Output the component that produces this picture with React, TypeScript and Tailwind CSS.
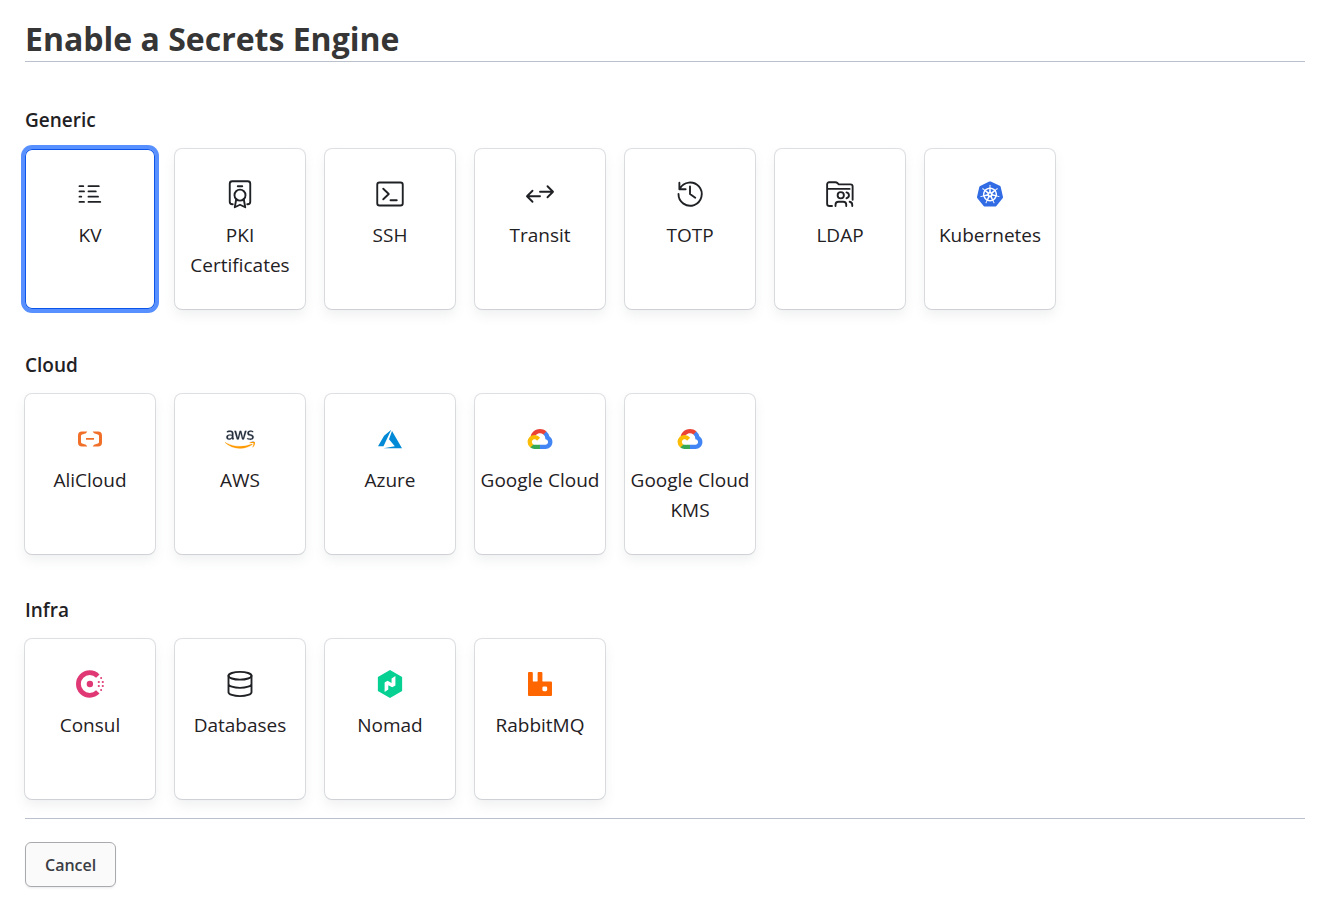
import React from "react";
import { FaAws } from "react-icons/fa";
import { SiKubernetes, SiNomad, SiRabbitmq } from "react-icons/si";

type Engine = { name: string; icon: React.ReactNode };

function Stroke({ children }: { children: React.ReactNode }) {
  return (
    <svg
      viewBox="0 0 24 24"
      className="size-[30px]"
      fill="none"
      stroke="currentColor"
      strokeWidth="1.5"
      strokeLinecap="round"
      strokeLinejoin="round"
      aria-hidden="true"
    >
      {children}
    </svg>
  );
}

const kv = (
  <Stroke>
    <path d="M3.6 5.7h3M10.8 5.7h8.2M3.6 9.9h3.6M10.8 9.9h5.8M3.6 14.1h1.4M10.8 14.1h7.6M3.6 18.3h3.6M10.8 18.3h9.4" />
  </Stroke>
);

const pki = (
  <Stroke>
    <path d="M6.2 20.2H5.8A2 2 0 0 1 3.8 18.2V3.8a2 2 0 0 1 2-2h12.4a2 2 0 0 1 2 2v14.4a2 2 0 0 1-2 2h-.4M10.2 5.8h3.6" />
    <circle cx="12" cy="12.9" r="4.4" />
    <path d="M9 16.2l-1.2 6.4L12 20.6l4.2 2L15 16.2" />
  </Stroke>
);

const ssh = (
  <Stroke>
    <rect x="1.8" y="2.8" width="20.4" height="18.4" rx="1.8" />
    <path d="M6.6 7.8l4.4 4.2-4.4 4.2M12.4 17h5" />
  </Stroke>
);

const transit = (
  <Stroke>
    <path d="M12 10.2h10.2M18 5.8l4.4 4.4-4.4 4.4M12 13.8H1.8M6 9.4l-4.4 4.4L6 18.2" />
  </Stroke>
);

const totp = (
  <Stroke>
    <path d="M2.8 12A9.3 9.3 0 1 0 3.9 7.7M3.5 3v5.2h5M12 6v6l4.2 3" />
  </Stroke>
);

const ldap = (
  <Stroke>
    <path d="M5.6 21.6H3.6a1.9 1.9 0 0 1-1.9-1.9V4.2a1.6 1.6 0 0 1 1.6-1.6h5.1c.6 0 1.1.2 1.5.6l1.1 1.1h9.4a1.7 1.7 0 0 1 1.7 1.7v10.6M1.9 7.9h17.8" />
    <circle cx="12.6" cy="13" r="2.5" />
    <path d="M17.2 10.7c2.6.6 2.6 4.1 0 4.7M8.4 21.6v-1a2.4 2.4 0 0 1 2.4-2.4h3.8a2.4 2.4 0 0 1 2.4 2.4v1M19.7 18.2c1.4.3 2.1 1.3 2.1 2.5v.9" />
  </Stroke>
);

const databases = (
  <Stroke>
    <ellipse cx="12" cy="5.4" rx="9.2" ry="3.1" />
    <path d="M2.8 5.4v13.2c0 1.7 4.1 3.1 9.2 3.1s9.2-1.4 9.2-3.1V5.4M2.8 12c0 1.7 4.1 3.1 9.2 3.1s9.2-1.4 9.2-3.1" />
  </Stroke>
);

const alicloud = (
  <svg viewBox="0 0 24 24" className="size-6" fill="#f0702a" aria-hidden="true">
    <path d="M3.996 4.517h5.291L8.01 6.324 4.153 7.506a1.668 1.668 0 0 0-1.165 1.601v5.786a1.668 1.668 0 0 0 1.165 1.6l3.857 1.183 1.277 1.807H3.996A3.996 3.996 0 0 1 0 15.487V8.513a3.996 3.996 0 0 1 3.996-3.996m16.008 0h-5.291l1.272 1.807 3.857 1.182c.715.227 1.17.889 1.165 1.601v5.786a1.668 1.668 0 0 1-1.165 1.6l-3.857 1.183-1.272 1.807h5.291A3.996 3.996 0 0 0 24 15.487V8.513a3.996 3.996 0 0 0-3.996-3.996m-4.007 8.345H8.002v-1.804h7.995Z" />
  </svg>
);

const aws = (
  <>
    <svg width="0" height="0" className="absolute" aria-hidden="true">
      <linearGradient id="aws-fill" x1="0" y1="0" x2="0" y2="1">
        <stop offset="0.66" stopColor="#252f3e" />
        <stop offset="0.66" stopColor="#ff9900" />
      </linearGradient>
    </svg>
    <FaAws
      className="h-[25px] w-[30px]"
      style={{ fill: "url(#aws-fill)", stroke: "url(#aws-fill)", strokeWidth: 3 }}
      aria-hidden="true"
    />
  </>
);

const azure = (
  <svg viewBox="0 0 24 24" className="size-6" fill="#0089d6" aria-hidden="true">
    <path d="M5.483 21.3H24L14.025 4.013l-3.038 8.347 5.836 6.938L5.483 21.3zM13.23 2.7L6.105 8.677 0 19.253h5.505v.014L13.23 2.7z" />
  </svg>
);

const gcp = (
  <svg viewBox="0 0 256 206" className="h-5 w-[26px]" aria-hidden="true">
    <path
      fill="#EA4335"
      d="M170.252 56.819l22.253-22.253 1.483-9.37C153.437-11.677 88.976-7.496 52.42 33.92 42.267 45.423 34.734 59.764 30.717 74.573l7.97-1.123 44.505-7.34 3.436-3.513c19.797-21.742 53.27-24.667 76.128-6.168l7.496.39z"
    />
    <path
      fill="#4285F4"
      d="M224.205 73.918a100.249 100.249 0 0 0-30.217-48.722l-31.232 31.232a55.515 55.515 0 0 1 20.379 44.037v5.544c15.35 0 27.797 12.446 27.797 27.796 0 15.352-12.446 27.486-27.797 27.486h-55.671l-5.466 5.934v33.34l5.466 5.231h55.67c39.93.311 72.553-31.494 72.864-71.424a72.303 72.303 0 0 0-31.793-60.454"
    />
    <path
      fill="#34A853"
      d="M71.87 205.796h55.593V161.29H71.87a27.275 27.275 0 0 1-11.4-2.498l-7.887 2.42-22.409 22.253-1.951 7.885c12.567 9.489 27.9 14.538 43.647 14.446"
    />
    <path
      fill="#FBBC05"
      d="M71.87 61.425C31.94 61.663-.237 94.228.001 134.158a72.301 72.301 0 0 0 28.222 56.881l32.247-32.246c-13.99-6.322-20.208-22.786-13.887-36.776 6.32-13.99 22.786-20.208 36.775-13.888a27.796 27.796 0 0 1 13.887 13.888l32.247-32.246A72.225 72.225 0 0 0 71.87 61.425"
    />
  </svg>
);

const consul = (
  <svg viewBox="0 0 30 30" className="size-[30px]" fill="#e03875" aria-hidden="true">
    <path d="M22.8 7.1A11.3 11.3 0 1 0 22.8 22.9" fill="none" stroke="#e03875" strokeWidth="4.8" />
    <circle cx="14.9" cy="15" r="3.2" />
    <circle cx="26.1" cy="9" r="1" />
    <circle cx="23.8" cy="13" r="1.1" />
    <circle cx="27.8" cy="13" r="1.1" />
    <circle cx="23.8" cy="17" r="1.1" />
    <circle cx="27.8" cy="17" r="1.1" />
    <circle cx="26.1" cy="21" r="1" />
  </svg>
);

const groups: { title: string; engines: Engine[] }[] = [
  {
    title: "Generic",
    engines: [
      { name: "KV", icon: kv },
      { name: "PKI Certificates", icon: pki },
      { name: "SSH", icon: ssh },
      { name: "Transit", icon: transit },
      { name: "TOTP", icon: totp },
      { name: "LDAP", icon: ldap },
      { name: "Kubernetes", icon: <SiKubernetes className="size-[26px] text-[#326ce5]" aria-hidden="true" /> },
    ],
  },
  {
    title: "Cloud",
    engines: [
      { name: "AliCloud", icon: alicloud },
      { name: "AWS", icon: aws },
      { name: "Azure", icon: azure },
      { name: "Google Cloud", icon: gcp },
      { name: "Google Cloud KMS", icon: gcp },
    ],
  },
  {
    title: "Infra",
    engines: [
      { name: "Consul", icon: consul },
      { name: "Databases", icon: databases },
      { name: "Nomad", icon: <SiNomad className="size-7 text-[#06d092]" aria-hidden="true" /> },
      { name: "RabbitMQ", icon: <SiRabbitmq className="size-6 text-[#ff6600]" aria-hidden="true" /> },
    ],
  },
];

function EngineCard({ engine, focused }: { engine: Engine; focused: boolean }) {
  const edge = focused
    ? "shadow-[inset_0_0_0_1px_#0c56e9,0_0_0_4px_#5990ff]"
    : "shadow-[0_0_0_1px_#656a7633,0_1px_1px_#656a760d,0_6px_12px_#656a761a]";
  return (
    <button
      type="button"
      className={`flex h-40 w-[130px] flex-col items-center rounded-[7px] bg-white pt-[30px] text-[19px] leading-[30px] outline-none ${edge}`}
    >
      <span className="flex h-[30px] items-center justify-center">{engine.icon}</span>
      <span className="mt-[11px]">{engine.name}</span>
    </button>
  );
}

export default function App() {
  return (
    <main className="bg-white pt-[19px] pr-7 pb-4 pl-[25px] font-['Open_Sans','Noto_Sans',sans-serif] text-[#1f2124]">
      <h1 className="border-b border-[#bac1cc] pb-[2px] text-[32px] leading-10 font-bold text-[#363636]">
        Enable a Secrets Engine
      </h1>
      {groups.map((group, g) => (
        <section key={group.title} className={g === 0 ? "mt-[43px]" : "mt-[41px]"}>
          <h2 className="text-[19px] leading-[30px] font-semibold">{group.title}</h2>
          <div className="mt-[14px] flex flex-wrap gap-5">
            {group.engines.map((engine) => (
              <EngineCard key={engine.name} engine={engine} focused={engine.name === "KV"} />
            ))}
          </div>
        </section>
      ))}
      <div className="mt-[19px] border-t border-[#bac1cc] pt-[23px]">
        <button
          type="button"
          className="h-[45px] rounded-[6px] border border-[#a9aaae] bg-[#fafafa] px-[19px] text-[16px] leading-6 font-semibold text-[#3b3d45] shadow-[0_1px_1px_#656a760d,0_2px_2px_#656a760d]"
        >
          Cancel
        </button>
      </div>
    </main>
  );
}
